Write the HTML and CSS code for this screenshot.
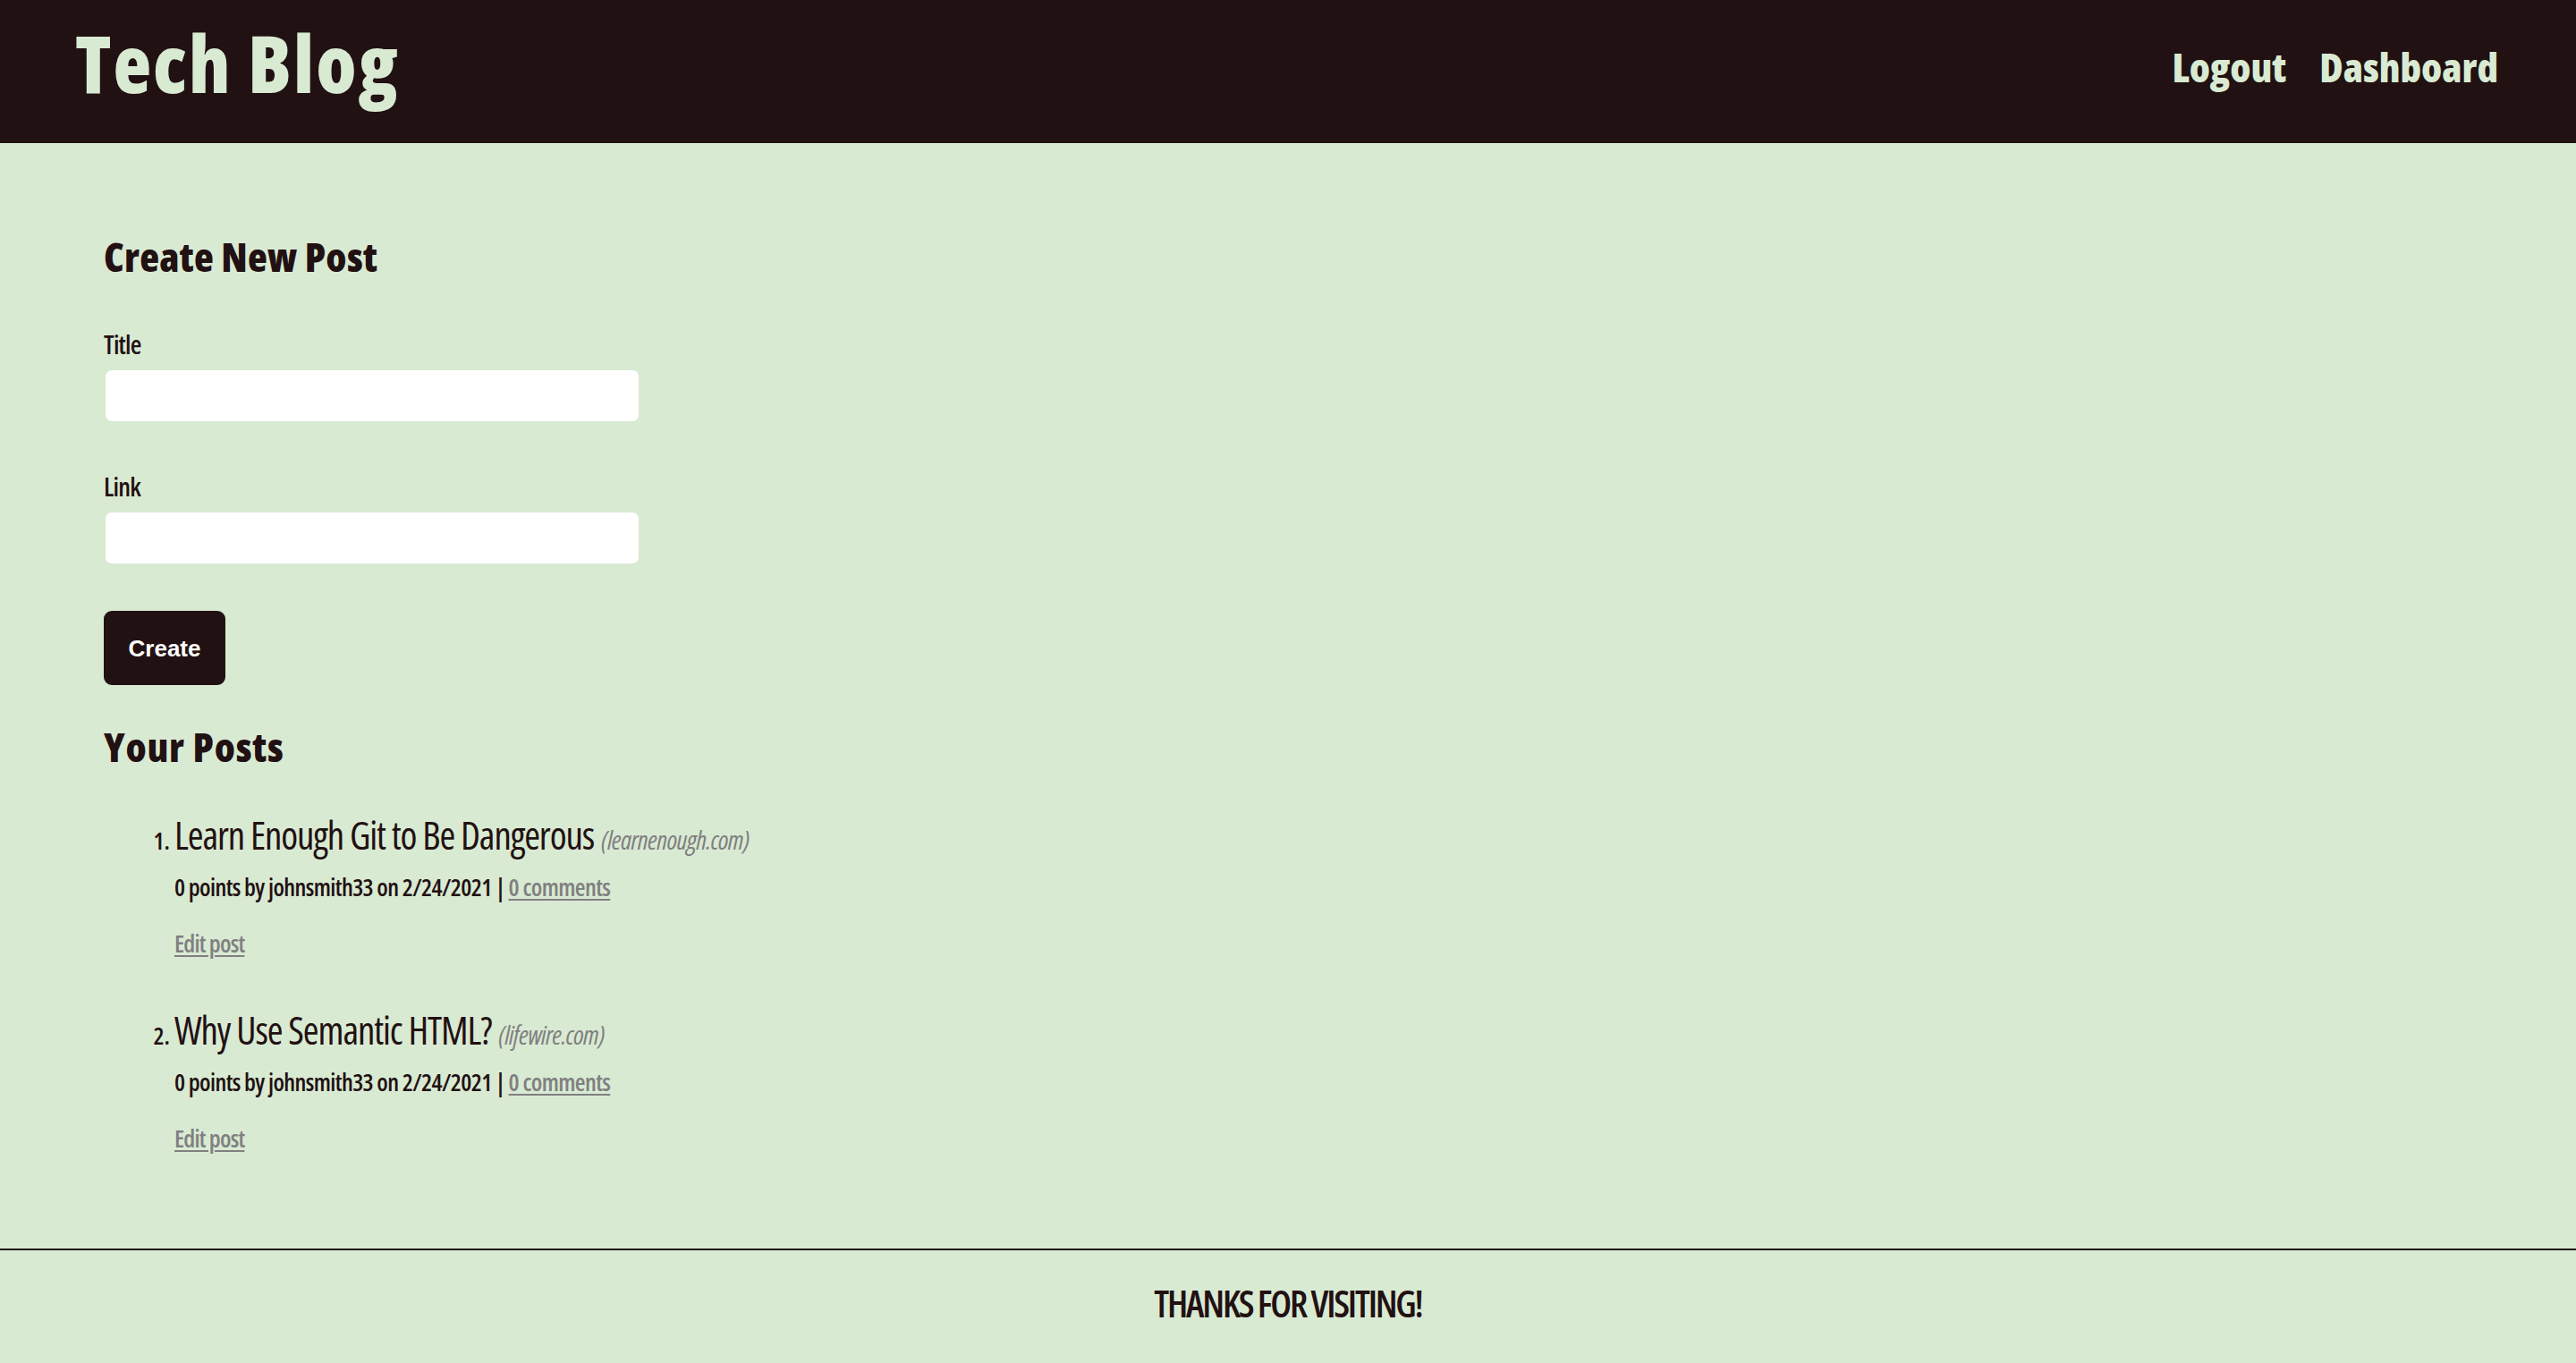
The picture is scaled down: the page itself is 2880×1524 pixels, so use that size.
FILE: index.html
```html
<!DOCTYPE html>
<html lang="en">
<head>
<meta charset="utf-8">
<title>Tech Blog</title>
<link rel="stylesheet" href="styles.css">
</head>
<body>
<header class="site-header">
  <h1 class="logo"><a class="logo-link" href="#">Tech Blog</a></h1>
  <nav class="nav">
    <a class="nav-link" href="#">Logout</a>
    <a class="nav-link" href="#">Dashboard</a>
  </nav>
</header>
<main class="main">
  <section class="new-post">
    <h2 class="heading heading-new">Create New Post</h2>
    <form class="form">
      <label class="label label-title" for="post-title">Title</label>
      <input class="input input-title" id="post-title" type="text">
      <label class="label label-link" for="post-url">Link</label>
      <input class="input input-link" id="post-url" type="text">
      <button class="btn" type="button">Create</button>
    </form>
  </section>
  <section class="posts">
    <h2 class="heading heading-posts">Your Posts</h2>
    <ol class="post-list">
      <li class="post">
        <div class="post-title"><a class="post-link" href="#">Learn Enough Git to Be Dangerous</a> <span class="domain">(learnenough.com)</span></div>
        <div class="post-meta">0 points by johnsmith33 on 2/24/2021 | <a class="muted" href="#">0 comments</a></div>
        <div class="post-edit"><a class="muted" href="#">Edit post</a></div>
      </li>
      <li class="post">
        <div class="post-title"><a class="post-link" href="#">Why Use Semantic HTML?</a> <span class="domain">(lifewire.com)</span></div>
        <div class="post-meta">0 points by johnsmith33 on 2/24/2021 | <a class="muted" href="#">0 comments</a></div>
        <div class="post-edit"><a class="muted" href="#">Edit post</a></div>
      </li>
    </ol>
  </section>
</main>
<footer class="site-footer">
  <p class="footer-text">THANKS FOR VISITING!</p>
</footer>
</body>
</html>
```
FILE: styles.css
```css
:root {
  --dark: #221112;
  --green: #d9ead3;
  --muted: #808080;
}

* { box-sizing: border-box; }

body {
  margin: 0;
  min-height: 100vh;
  display: flex;
  flex-direction: column;
  background: var(--green);
  color: var(--dark);
  font-family: "Open Sans", "Liberation Sans", sans-serif;
  font-stretch: 75%;
}

a { color: inherit; text-decoration: none; }

/* ---------- header ---------- */
.site-header {
  height: 160px;
  flex: none;
  background: var(--dark);
  display: flex;
  justify-content: space-between;
  align-items: flex-start;
  padding: 0 87px 0 84px;
}

.logo {
  margin: 26px 0 0;
  font-size: 88px;
  line-height: 88px;
  font-weight: 800;
  letter-spacing: 2px;
  color: var(--green);
  white-space: nowrap;
}

.nav {
  margin-top: 52px;
  display: flex;
  gap: 37px;
  font-size: 45px;
  line-height: 45px;
  font-weight: 800;
  color: var(--green);
  white-space: nowrap;
}

/* ---------- main ---------- */
.main {
  flex: 1;
  padding: 104px 116px 0;
}

.heading {
  margin: 0;
  font-size: 45px;
  line-height: 45px;
  font-weight: 800;
  white-space: nowrap;
}

.heading-new { letter-spacing: 0.3px; }
.heading-posts { margin-top: 46px; letter-spacing: 0.8px; }

.form {
  display: flex;
  flex-direction: column;
  align-items: flex-start;
}

.label {
  display: block;
  font-size: 29px;
  line-height: 29px;
  font-weight: 600;
  letter-spacing: -0.8px;
}

.label-title { margin-top: 61px; }
.label-link { margin-top: 58px; }

.input {
  margin: 15px 0 0 2px;
  width: 596px;
  height: 57px;
  border: 0;
  border-radius: 7px;
  background: #fff;
  padding: 0 14px;
  font: inherit;
  font-size: 26px;
}

.btn {
  margin-top: 53px;
  width: 136px;
  height: 83px;
  border: 0;
  border-radius: 9px;
  background: var(--dark);
  color: #fff;
  padding: 0;
  font-family: "Liberation Sans", Arial, sans-serif;
  font-weight: 700;
  font-size: 26px;
  line-height: 26px;
  cursor: pointer;
}

/* ---------- posts ---------- */
.post-list {
  margin: 55px 0 0;
  padding: 0 0 0 79px;
}

.post {
  font-size: 27px;
  font-weight: 600;
}

.post + .post { margin-top: 62px; }

.post-title {
  font-size: 43px;
  line-height: 43px;
  font-weight: 500;
  white-space: nowrap;
}

.post-link { letter-spacing: -1.1px; }

.domain {
  font-size: 29px;
  font-style: italic;
  font-weight: 400;
  letter-spacing: -0.6px;
  color: var(--muted);
}

.post-meta {
  margin-top: 18px;
  line-height: 27px;
  letter-spacing: -0.62px;
  white-space: nowrap;
}

.post-edit {
  margin-top: 36px;
  line-height: 27px;
  letter-spacing: -0.8px;
  white-space: nowrap;
}

.muted {
  color: var(--muted);
  text-decoration: underline;
  text-decoration-thickness: 2px;
  text-underline-offset: 3px;
}

/* ---------- footer ---------- */
.site-footer {
  flex: none;
  height: 128px;
  border-top: 2px solid var(--dark);
  padding-top: 38px;
  text-align: center;
}

.footer-text {
  margin: 0;
  font-size: 42px;
  line-height: 42px;
  font-weight: 600;
  letter-spacing: -2.2px;
  white-space: nowrap;
}
```
